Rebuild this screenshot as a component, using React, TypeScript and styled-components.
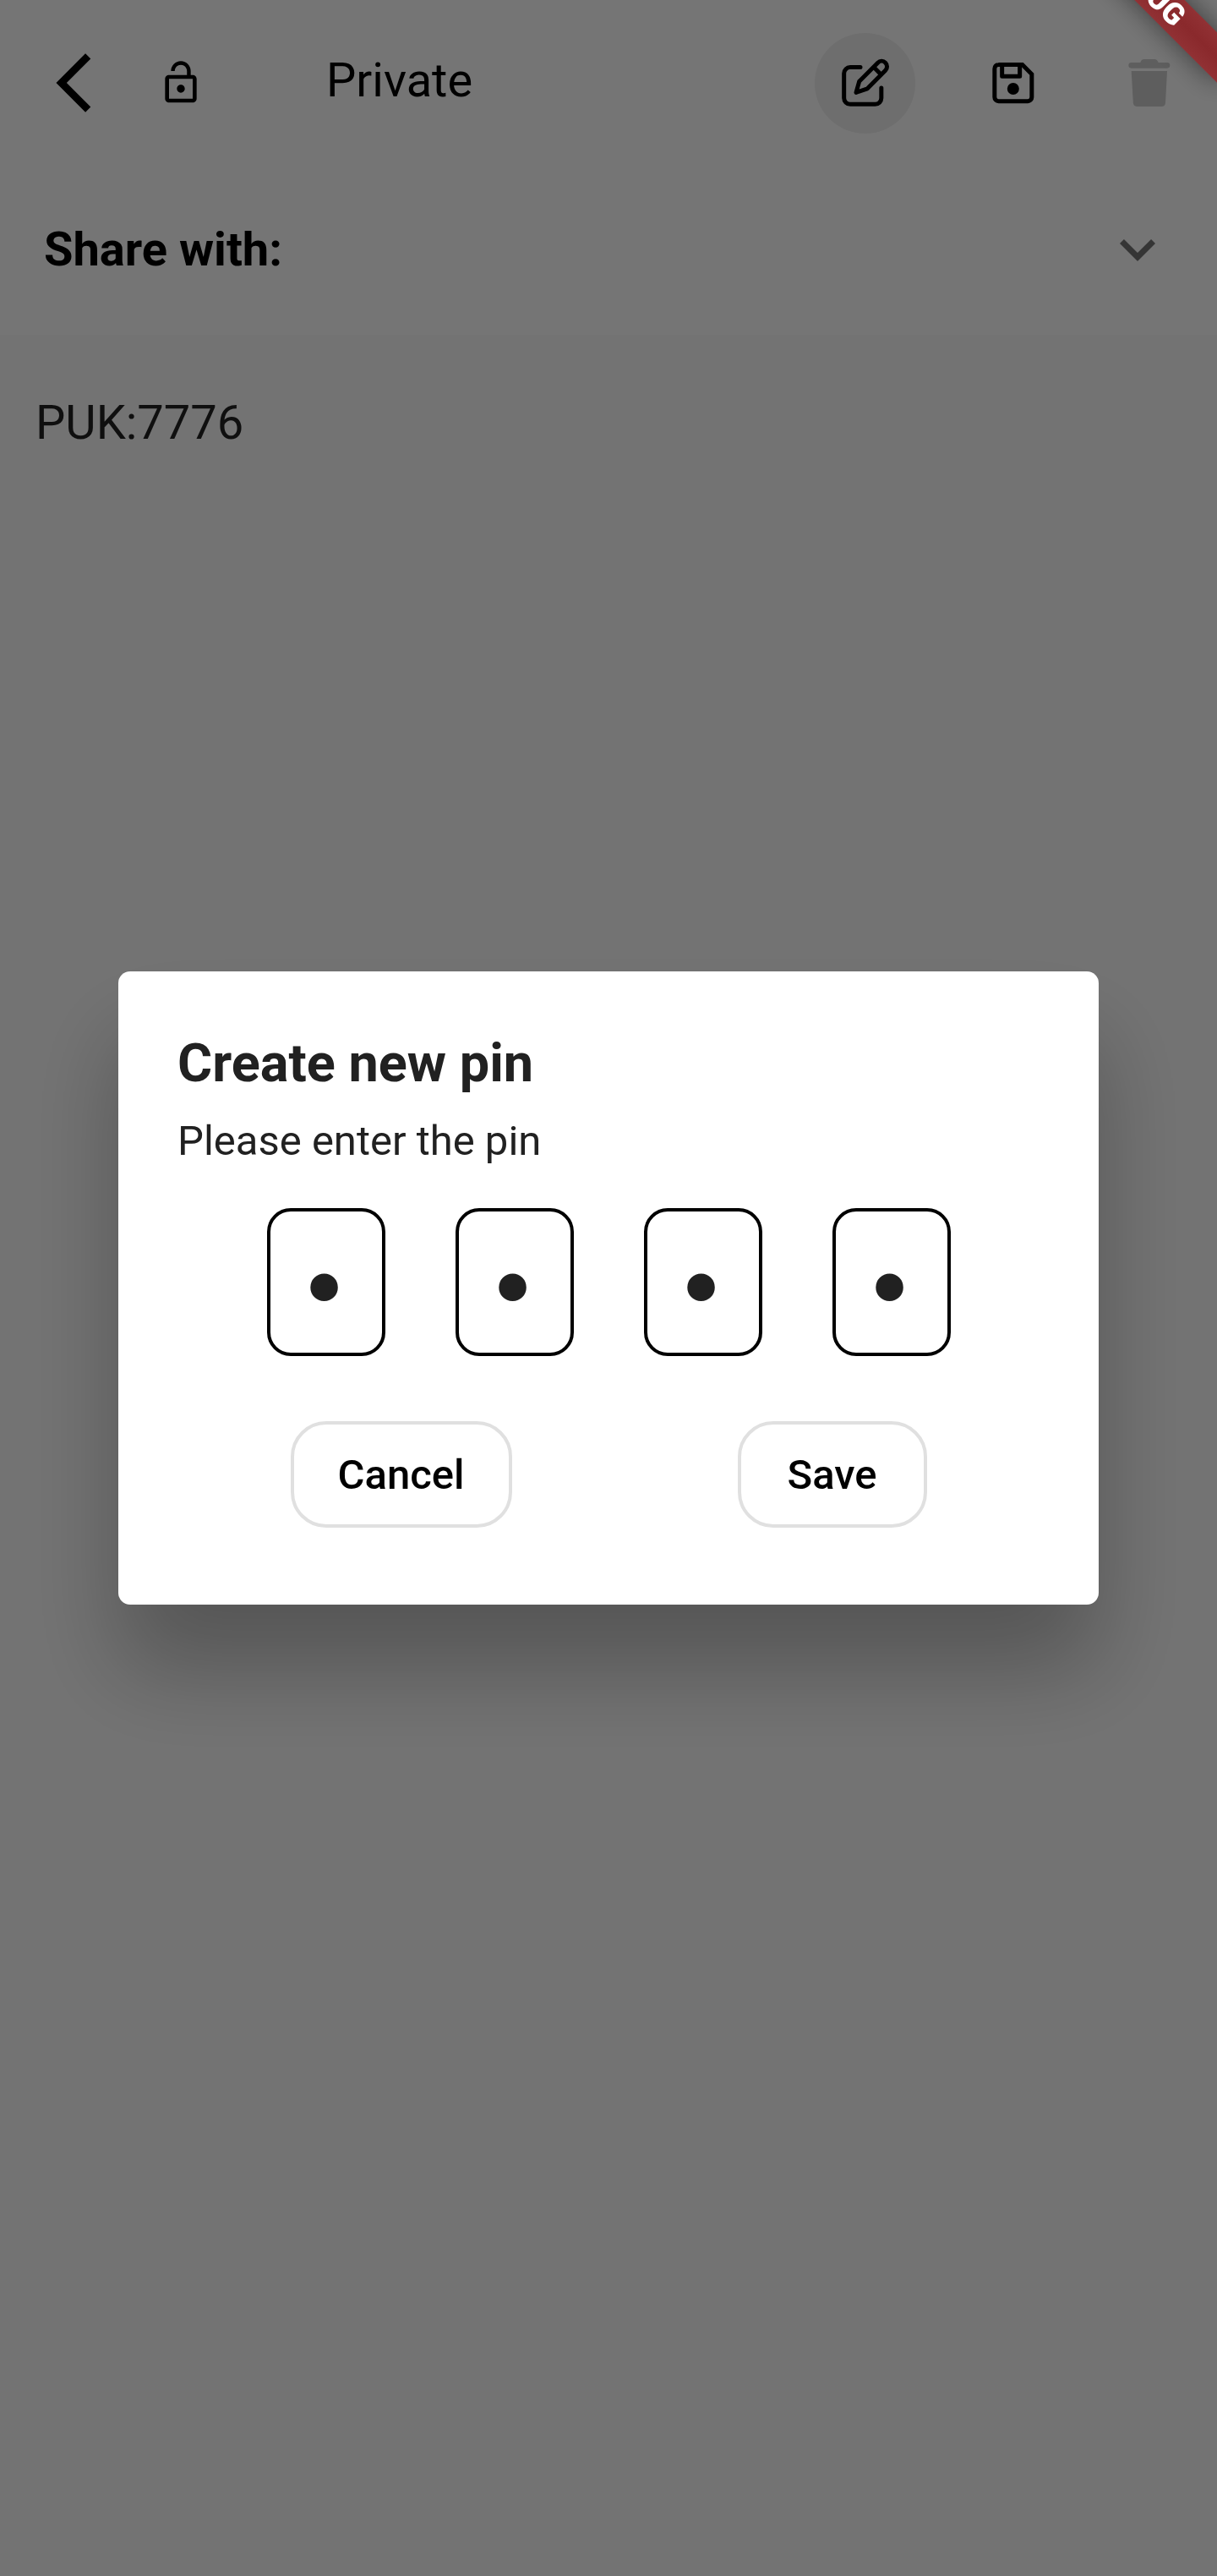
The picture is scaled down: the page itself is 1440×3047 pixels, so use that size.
import React, { useState } from "react";
import styled, { createGlobalStyle } from "styled-components";

const GlobalStyle = createGlobalStyle`
  *, *::before, *::after { box-sizing: border-box; }
  body {
    margin: 0;
    background: #fafafa;
    font-family: Roboto, "Liberation Sans", sans-serif;
  }
`;

const Screen = styled.div`
  display: flex;
  flex-direction: column;
  min-height: 100vh;
  overflow: hidden;
`;

const Toolbar = styled.header`
  display: flex;
  align-items: center;
  height: 196px;
  padding: 0 34px 0 46px;
  background: #fff;
`;

const IconButton = styled.button<{ $size: number; $filled?: boolean }>`
  display: flex;
  align-items: center;
  justify-content: center;
  flex: none;
  width: ${(p) => p.$size}px;
  height: ${(p) => p.$size}px;
  padding: 0;
  border: 0;
  border-radius: 50%;
  background: ${(p) => (p.$filled ? "#efefef" : "transparent")};
  color: #000;

  &:disabled {
    color: #cdcdcd;
  }
`;

const Icon = styled.svg<{ $size: number }>`
  display: block;
  width: ${(p) => p.$size}px;
  height: ${(p) => p.$size}px;
`;

const LockButton = styled(IconButton)`
  margin: 0 144px 0 56px;
`;

const ScreenTitle = styled.h1`
  flex: 1;
  margin: 0;
  padding-bottom: 6px;
  font-size: 56px;
  line-height: 66px;
  font-weight: 400;
  color: #000;
`;

const Actions = styled.div`
  display: flex;
  align-items: center;
  gap: 56px;
`;

const SharePanel = styled.section`
  padding-bottom: 4px;
  background: #fff;
`;

const ShareToggle = styled.button`
  display: flex;
  align-items: center;
  justify-content: space-between;
  width: 100%;
  height: 196px;
  padding: 2px 52px 0;
  border: 0;
  background: transparent;
  font: 700 56px/66px Roboto, "Liberation Sans", sans-serif;
  color: #000;
  text-align: left;

  svg {
    color: rgba(0, 0, 0, 0.54);
  }
`;

const Note = styled.p`
  margin: 0;
  padding: 71px 42px;
  font-size: 56px;
  line-height: 66px;
  color: rgba(0, 0, 0, 0.87);
`;

const Backdrop = styled.div`
  position: fixed;
  inset: 0;
  display: flex;
  align-items: center;
  justify-content: center;
  padding: 0 140px;
  background: rgba(0, 0, 0, 0.54);
`;

const Dialog = styled.form`
  width: 100%;
  padding: 71px 70px 91px;
  border-radius: 14px;
  background: #fff;
  box-shadow: 0 77px 112px rgba(0, 0, 0, 0.26);
  color: #212121;
`;

const DialogTitle = styled.h2`
  margin: 0 0 25px;
  font-size: 63px;
  line-height: 76px;
  font-weight: 700;
`;

const DialogText = styled.p`
  margin: 0 0 50px;
  font-size: 49px;
  line-height: 58px;
`;

const PinRow = styled.div`
  display: flex;
  justify-content: center;
  gap: 83px;
  margin-bottom: 77px;
`;

const PinBox = styled.input`
  width: 140px;
  height: 175px;
  padding: 18px 4px 0 0;
  border: 4px solid #000;
  border-radius: 28px;
  outline: 0;
  background: #fff;
  font: 400 112px/132px "DejaVu Sans", sans-serif;
  color: #212121;
  text-align: center;
`;

const ButtonRow = styled.div`
  display: flex;
  justify-content: space-around;
`;

const DialogButton = styled.button`
  min-width: 224px;
  height: 126px;
  padding: 2px 52px 0;
  border: 4px solid #e0e0e0;
  border-radius: 42px;
  background: #fff;
  font: 500 49px/58px Roboto, "Liberation Sans", sans-serif;
  color: #000;
`;

/* Strip that crosses the corner of the window, over the backdrop. */
const RibbonCorner = styled.div`
  position: fixed;
  top: 0;
  right: 0;
  width: 200px;
  height: 200px;
  overflow: hidden;
  pointer-events: none;
`;

const Ribbon = styled.div`
  position: absolute;
  top: -37px;
  right: -56px;
  width: 280px;
  height: 42px;
  transform: rotate(45deg);
  background: linear-gradient(#913134, #8a292c 50%, #913134);
  box-shadow: 0 0 32px rgba(0, 0, 0, 0.5);
  font-size: 36px;
  line-height: 42px;
  font-weight: 900;
  color: #fff;
  text-align: center;
`;

const BackIcon = () => (
  <Icon $size={84} viewBox="0 0 24 24" fill="currentColor" aria-hidden="true">
    <path d="M17.51 3.87 15.73 2.1 5.84 12l9.9 9.9 1.77-1.77L9.38 12z" />
  </Icon>
);

const LockOpenIcon = () => (
  <Icon $size={56} viewBox="0 0 24 24" fill="currentColor" aria-hidden="true">
    <path d="M12 17c1.1 0 2-.9 2-2s-.9-2-2-2-2 .9-2 2 .9 2 2 2zm6-9h-1V6c0-2.76-2.24-5-5-5S7 3.24 7 6h1.9c0-1.71 1.39-3.1 3.1-3.1s3.1 1.39 3.1 3.1v2H6c-1.1 0-2 .9-2 2v10c0 1.1.9 2 2 2h12c1.1 0 2-.9 2-2V10c0-1.1-.9-2-2-2zm0 12H6V10h12v10z" />
  </Icon>
);

const EditIcon = () => (
  <Icon
    $size={60}
    viewBox="0 0 180 180"
    fill="none"
    stroke="currentColor"
    strokeWidth="15"
    strokeLinecap="round"
    strokeLinejoin="round"
    aria-hidden="true"
  >
    <path d="M72 34.500H36a22 22 0 0 0-22 22V144a22 22 0 0 0 22 22h88.500a22 22 0 0 0 22-22v-36" />
    <path d="M57 124 68 85l66-66.400a19 19 0 0 1 27 27L97 110.500z" />
    <path d="m119 34 26 26" strokeLinecap="butt" />
  </Icon>
);

const SaveIcon = () => (
  <Icon
    $size={60}
    viewBox="0 0 180 180"
    fill="none"
    stroke="currentColor"
    strokeWidth="15"
    aria-hidden="true"
  >
    <path d="M37 25.500h85L155.500 59v82a14 14 0 0 1-14 14H37.500a14 14 0 0 1-14-14V39.500a14 14 0 0 1 14-14z" />
    <path d="M50 26v41h63V26" strokeLinejoin="round" />
    <circle cx="89.500" cy="111" r="21" fill="currentColor" stroke="none" />
  </Icon>
);

const TrashIcon = () => (
  <Icon $size={60} viewBox="0 0 180 180" fill="currentColor" aria-hidden="true">
    <path d="M26 18h32c1-7 7-12 14-12h35c7 0 13 5 15 12h31a10 10 0 0 1 0 20H26a10 10 0 0 1 0-20z" />
    <path d="M26 48h127l-6 113c-.5 8-6 13-14 13H47c-8 0-14-5-14.500-13z" />
  </Icon>
);

const ExpandIcon = () => (
  <Icon $size={84} viewBox="0 0 24 24" fill="currentColor" aria-hidden="true">
    <path d="M16.590 8.590 12 13.170 7.410 8.590 6 10l6 6 6-6z" />
  </Icon>
);

const PIN_LABELS = ["First digit", "Second digit", "Third digit", "Fourth digit"];

export default function App() {
  const [pin, setPin] = useState(["0", "0", "0", "0"]);

  const setDigit = (index: number, value: string) =>
    setPin((digits) => digits.map((d, i) => (i === index ? value : d)));

  return (
    <>
      <GlobalStyle />
      <Screen>
        <Toolbar>
          <IconButton $size={84} aria-label="Back">
            <BackIcon />
          </IconButton>
          <LockButton $size={56} aria-label="Lock">
            <LockOpenIcon />
          </LockButton>
          <ScreenTitle>Private</ScreenTitle>
          <Actions>
            <IconButton $size={119} $filled aria-label="Edit">
              <EditIcon />
            </IconButton>
            <IconButton $size={119} aria-label="Save note">
              <SaveIcon />
            </IconButton>
            <IconButton $size={92} disabled aria-label="Delete">
              <TrashIcon />
            </IconButton>
          </Actions>
        </Toolbar>
        <SharePanel>
          <ShareToggle aria-expanded={false}>
            Share with:
            <ExpandIcon />
          </ShareToggle>
        </SharePanel>
        <Note>PUK:7776</Note>
      </Screen>
      <Backdrop>
        <Dialog
          role="dialog"
          aria-labelledby="pin-title"
          onSubmit={(e: React.FormEvent) => e.preventDefault()}
        >
          <DialogTitle id="pin-title">Create new pin</DialogTitle>
          <DialogText>Please enter the pin</DialogText>
          <PinRow>
            {PIN_LABELS.map((label, i) => (
              <PinBox
                key={label}
                type="password"
                inputMode="numeric"
                maxLength={1}
                autoComplete="off"
                aria-label={label}
                value={pin[i]}
                onChange={(e: React.ChangeEvent<HTMLInputElement>) =>
                  setDigit(i, e.target.value)
                }
              />
            ))}
          </PinRow>
          <ButtonRow>
            <DialogButton type="button">Cancel</DialogButton>
            <DialogButton type="submit">Save</DialogButton>
          </ButtonRow>
        </Dialog>
      </Backdrop>
      <RibbonCorner aria-hidden="true">
        <Ribbon>DEBUG</Ribbon>
      </RibbonCorner>
    </>
  );
}
